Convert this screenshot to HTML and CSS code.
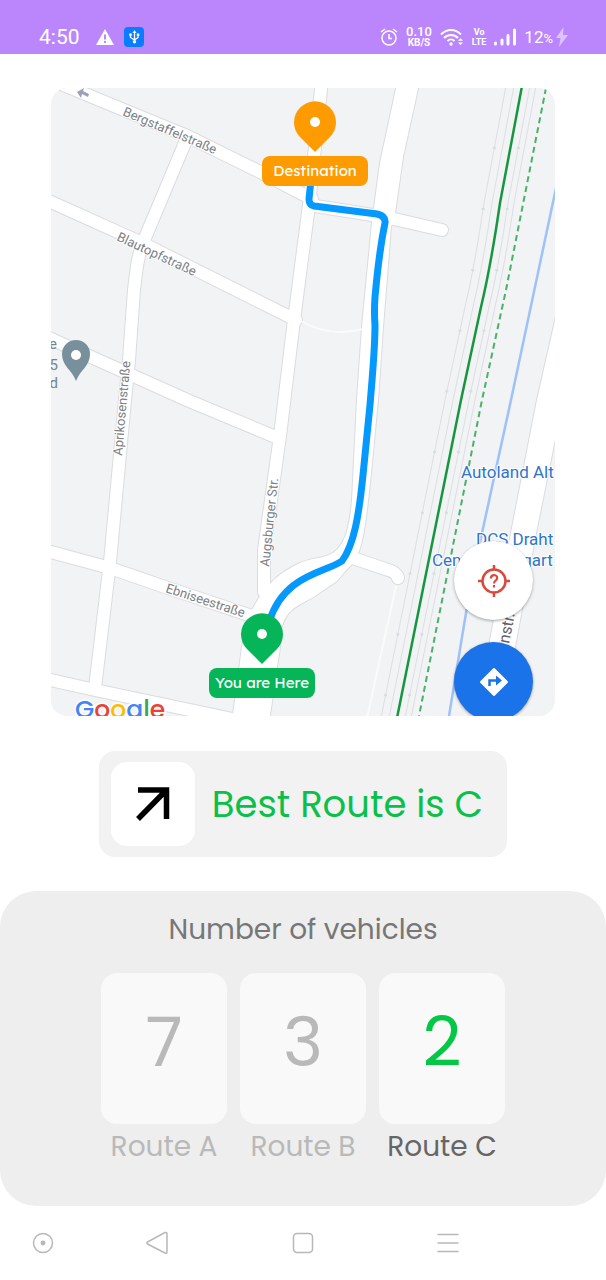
FILE: index.html
```html
<!DOCTYPE html>
<html lang="en">
<head>
<meta charset="utf-8">
<meta name="viewport" content="width=device-width, initial-scale=1">
<title>Best Route</title>
<link rel="stylesheet" href="styles.css">
</head>
<body>
<header class="status">
  <span class="clock">4:50</span>
  <svg class="warn" width="18" height="18" viewBox="0 0 18 18"><path d="M9 1 18 17H0z" fill="#fff"/><path d="M9 6.500v5M9 13v2" stroke="#bb86fc" stroke-width="2"/></svg>
  <svg class="usb" width="20" height="20" viewBox="0 0 20 20"><rect width="20" height="20" rx="4" fill="#0a7cff"/><path d="M10.500 5v9M6.500 8v2.500l4 2.500 3.500-2.500V8" fill="none" stroke="#fff" stroke-width="1.300"/><path d="m10.500 3 2 3h-4z" fill="#fff"/><circle cx="6.500" cy="7.700" r="1.400" fill="#fff"/><path d="M12.800 6.500h2.500v2.500h-2.500z" fill="#fff"/><circle cx="10.500" cy="14.800" r="1.700" fill="#fff"/></svg>
  <div class="status-right">
    <svg width="18" height="20" viewBox="0 0 18 20" fill="none" stroke="#fff" stroke-width="1.500"><circle cx="9" cy="11" r="7"/><path d="M9 7v4.500h3M1 5l4-3M17 5l-4-3"/></svg>
    <span class="stack rate"><b>0.10</b><small>KB/S</small></span>
    <svg width="24" height="20" viewBox="0 0 24 20" fill="none" stroke="#fff" stroke-width="2"><path d="M1 7.500C7 1.500 15 1.500 21 7.500M4 11c4-4 10-4 14 0M7.500 14c2-2 5-2 7 0"/><circle cx="11" cy="17" r="1.700" fill="#fff" stroke="none"/><path d="m18 13.700 2.500-2.500 2.500 2.500zM18 15.500l2.500 2.500 2.500-2.500z" fill="#fff" stroke="none"/></svg>
    <span class="stack lte"><b>Vo</b><b>LTE</b></span>
    <svg width="22" height="18" viewBox="0 0 22 18" stroke="#fff" stroke-width="3" stroke-linecap="round"><path d="M1.500 15v1M8 12v4M14 7.500V16M20.500 2v14"/></svg>
    <span class="battery">12<small>%</small></span>
    <svg class="bolt" width="12" height="20" viewBox="0 0 12 20"><path d="M7.500 0 0 11h4.500L3 20l9-12H7z" fill="#fff" opacity=".5"/></svg>
  </div>
</header>

<main>
  <section class="map" aria-label="Route map">
    <svg class="map-art" viewBox="51 88 504 628">
      <rect x="51" y="88" width="504" height="628" fill="#f1f3f4"/>
      <defs>
        <g id="roads">
          <path d="M30 71 90 96 187 136 262 173 312 199"/>
          <path d="M30 193 51 202 140 242 288 316 296 320"/>
          <path d="M187 138 145 238C138 254 137 264 134 290L129 360 125 400 110 562 95 688"/>
          <path d="M30 329 51 339 187 400 278 438"/>
          <path d="M30 546 51 552 110 568 165 587 258 618"/>
          <path d="M30 675 51 680 95 690 242 721"/>
          <path d="M322 80 309 205 294 320 280 436 264 550V592"/>
          <path d="M309 205 385 217 442 230"/>
          <path d="M350 557 385 569Q397 572 398 578"/>
        </g>
        <g id="mains">
          <path d="M397 84 380 163 374 208 372 223 362 327 357 400 352 500Q349 535 340 546C330 560 316 556 300 563 280 572 265 585 252 610L242 647 232 722H269L280 647Q279 625 288 614C295 605 306 602 315 596L337 581Q344 572 353 563C363 550 366 520 370 483L378 400 383 327 391 227 395 213 403 157 419 84Z"/>
          <path d="M562 290 537 400 511 533 490 640 473 720H500L515 647 536 533 562 405Z"/>
        </g>
        <path id="rail" d="M522 86 500 203Q491 265 481 307L461 400 397 718"/>
      </defs>
      <use href="#roads" fill="none" stroke="#dadce0" stroke-width="14" stroke-linecap="round"/>
      <use href="#mains" fill="#fff" stroke="#dadce0" stroke-width="2"/>
      <use href="#roads" fill="none" stroke="#fff" stroke-width="12" stroke-linecap="round"/>
      <use href="#mains" fill="#fff"/>
      <path d="M301 321Q330 338 363 329M396 586 367 718" fill="none" stroke="#fbfbfc" stroke-width="2"/>
      <g fill="none" stroke="#dcdee2" stroke-width="1">
        <use href="#rail" x="-16"/><use href="#rail" x="-8"/><use href="#rail" x="8"/><use href="#rail" x="14"/>
      </g>
      <g fill="none" stroke="#d8dbdf" stroke-width="3" stroke-dasharray="2 60">
        <use href="#rail" x="-16"/><use href="#rail" x="8"/>
      </g>
      <use href="#rail" fill="none" stroke="#18963f" stroke-width="2.500"/>
      <path d="M546 88 506 290 482 400 419 716" fill="none" stroke="#4bb06a" stroke-width="2" stroke-dasharray="6 4"/>
      <path d="M556 188 511 400 482 533 466 613 449 716" fill="none" stroke="#9fc1fa" stroke-width="2.500"/>
      <path d="M311 180 309 199Q309 205 314 206L377 214Q386 216 385 223C379 252 377 275 375 297Q374 312 375 325C375 350 372 380 370 405L363 475C359 515 354 545 342 561 325 573 284 574 269 622" fill="none" stroke="#0699fd" stroke-width="7"/>
      <path d="m77 92 7-4-1 3 6 3-1 3-6-3-1 4z" fill="#9aa3b5"/>

      <g class="street">
        <text transform="translate(122 115) rotate(23)">Bergstaffelstraße</text>
        <text transform="translate(116 240) rotate(25)">Blautopfstraße</text>
        <text transform="translate(122 456) rotate(-85)">Aprikosenstraße</text>
        <text transform="translate(269 567) rotate(-84)">Augsburger Str.</text>
        <text transform="translate(165 592) rotate(18)">Ebniseestraße</text>
        <text class="street-lg" transform="translate(509 644) rotate(-79)">nstr.</text>
      </g>
      <g class="poi">
        <text x="461" y="478">Autoland Alt</text>
        <text x="476" y="545">DCS Draht</text>
        <text x="432" y="566">Center Stuttgart</text>
      </g>
      <g class="place">
        <text x="57" y="349">e</text>
        <text x="58" y="370">5</text>
        <text x="58" y="388">d</text>
      </g>
      <path d="M76 381C72 370 62 366 62 354a14 14 0 0 1 28 0c0 12-10 16-14 27z" fill="#78909c"/>
      <circle cx="76" cy="355" r="5" fill="#fff"/>

      <text class="google" x="75" y="718"><tspan fill="#4285f4">G</tspan><tspan fill="#ea4335">o</tspan><tspan fill="#fbbc05">o</tspan><tspan fill="#4285f4">g</tspan><tspan fill="#34a853">l</tspan><tspan fill="#ea4335">e</tspan></text>

      <path d="M315 152 300 137A21 21 0 1 1 330 137Z" fill="#fe9b00"/>
      <circle cx="315" cy="122" r="5" fill="#fff"/>
      <rect x="262" y="156" width="106" height="30" rx="8" fill="#fe9b00"/>
      <text class="chip" x="315" y="176">Destination</text>
      <path d="M262 664 247 649A21 21 0 1 1 277 649Z" fill="#05b558"/>
      <circle cx="262" cy="634" r="5" fill="#fff"/>
      <rect x="209" y="668" width="106" height="30" rx="8" fill="#05b558"/>
      <text class="chip" x="262" y="688">You are Here</text>
    </svg>
    <button class="fab locate" aria-label="Find my location">
      <svg width="32" height="32" viewBox="0 0 32 32" fill="none" stroke="#d94a3d" stroke-width="2.500"><circle cx="16" cy="16" r="11.500"/><path d="M16 0v5M16 27v5M0 16h5M27 16h5"/><path d="M12.800 13.500c0-4.500 6.400-4.500 6.400-.5 0 2.500-3.200 2.500-3.200 5.500M16 20v2.500" stroke-width="2.200"/></svg>
    </button>
    <button class="fab directions" aria-label="Directions">
      <svg width="30" height="30" viewBox="0 0 30 30"><path d="M15 2 28 15 15 28 2 15z" fill="#fff" stroke="#fff" stroke-width="2" stroke-linejoin="round"/><path d="M10.500 19v-5.500H19" fill="none" stroke="#1a73e8" stroke-width="2.500"/><path d="m17 8.500 6 5-6 5z" fill="#1a73e8"/></svg>
    </button>
  </section>

  <section class="best">
    <span class="arrow"><svg width="36" height="36" viewBox="0 0 36 36" fill="none" stroke="#000" stroke-width="5.500"><path d="M3 4H31.500V33M31 4.500 3 33"/></svg></span>
    <h1>Best Route is C</h1>
  </section>

  <section class="vehicles">
    <h2>Number of vehicles</h2>
    <div class="routes">
      <div class="route"><div class="count">7</div><div class="name">Route A</div></div>
      <div class="route"><div class="count">3</div><div class="name">Route B</div></div>
      <div class="route chosen"><div class="count">2</div><div class="name">Route C</div></div>
    </div>
  </section>
</main>

<nav class="sysnav">
  <button aria-label="Assist"><svg width="24" height="24" viewBox="0 0 24 24"><circle cx="12" cy="12" r="9.500"/><circle cx="12" cy="12" r="1.700" fill="#b8b8b8"/></svg></button>
  <button aria-label="Back"><svg width="24" height="24" viewBox="0 0 24 24"><path d="M2.500 11 20 1.500Q22 1 22 3V21Q22 23 20 22L2.500 13Q1 12 2.500 11z"/></svg></button>
  <button aria-label="Home"><svg width="24" height="24" viewBox="0 0 24 24"><rect x="2.500" y="2.500" width="19" height="19" rx="3.500"/></svg></button>
  <button aria-label="Menu"><svg width="24" height="24" viewBox="0 0 24 24"><path d="M2 3.500h20M2 12h20M2 20.500h20"/></svg></button>
</nav>
</body>
</html>
```
FILE: styles.css
```css
* { box-sizing: border-box; }

body {
  margin: 0;
  background: #fff;
  font-family: Poppins, Inter, sans-serif;
}

h1, h2 { margin: 0; font-weight: 400; }

button {
  display: grid;
  place-items: center;
  padding: 0;
  border: 0;
  background: none;
}

svg { display: block; }

.status {
  display: flex;
  align-items: center;
  height: 54px;
  padding: 20px 38px 0 39px;
  background: #bb86fc;
  color: #fff;
  font-family: Roboto, sans-serif;
}

.clock { font-size: 21px; margin-right: 16px; }
.warn { margin-right: 10px; }

.status-right {
  display: flex;
  align-items: center;
  gap: 8px;
  margin-left: auto;
}

.stack {
  display: flex;
  flex-direction: column;
  align-items: center;
  line-height: 10px;
}

.rate b { font-size: 13px; font-weight: 500; line-height: 12px; }
.rate small { font-size: 10px; font-weight: 700; }
.lte b { font-size: 9px; font-weight: 700; }
.battery { font-size: 17px; }
.battery small { font-size: 13px; }
.bolt { margin-left: -5px; }

.map {
  position: relative;
  margin: 34px 51px 35px;
  overflow: hidden;
  border-radius: 16px;
}

.map-art { width: 100%; height: auto; }

.street {
  font: 13px Roboto, sans-serif;
  fill: #7b8086;
  stroke: #fff;
  stroke-width: 2px;
  paint-order: stroke;
}

.street-lg { font-size: 16px; fill: #5f6368; }

.poi {
  font: 17px Roboto, sans-serif;
  fill: #2f74c8;
  stroke: #fff;
  stroke-width: 2px;
  paint-order: stroke;
}

.place {
  font: 15px Roboto, sans-serif;
  fill: #6f8791;
  text-anchor: end;
}

.google {
  font: 500 25px Poppins, Lato, sans-serif;
  stroke: #fff;
  stroke-width: 3px;
  paint-order: stroke;
}

.chip {
  font: 15px Lexend, Inter, sans-serif;
  fill: #fff;
  text-anchor: middle;
}

.fab {
  position: absolute;
  right: 22px;
  width: 79px;
  height: 79px;
  border-radius: 50%;
  box-shadow: 0 1px 3px rgba(0, 0, 0, 0.35);
}

.locate { bottom: 96px; background: #fff; }
.directions { bottom: -5px; background: #1a73e8; }

.best {
  display: flex;
  align-items: center;
  gap: 17px;
  width: fit-content;
  margin: 0 auto 34px;
  padding: 11px 24px 11px 12px;
  border-radius: 16px;
  background: #f2f2f2;
}

.arrow {
  display: grid;
  place-items: center;
  width: 84px;
  height: 84px;
  border-radius: 16px;
  background: #fff;
}

.best h1 { font-size: 37px; color: #0bc04a; }

.vehicles {
  padding: 17px 24px 36px;
  border-radius: 36px;
  background: #eee;
  text-align: center;
}

.vehicles h2 {
  margin-bottom: 21px;
  font-size: 28px;
  line-height: 44px;
  color: #777;
}

.routes {
  display: flex;
  justify-content: center;
  gap: 13px;
}

.route { width: 126px; color: #b9b9b9; }

.count {
  height: 151px;
  border-radius: 16px;
  background: #f9f9f9;
  font-size: 68px;
  line-height: 140px;
}

.name { font-size: 28px; line-height: 46px; white-space: nowrap; }
.chosen .count { color: #05c746; }
.chosen .name { color: #666; }

.sysnav {
  display: grid;
  grid-template-columns: 86fr 142fr 150fr 140fr 88fr;
  height: 74px;
}

.sysnav svg { fill: none; stroke: #b8b8b8; stroke-width: 1.500px; stroke-linecap: round; }
```
